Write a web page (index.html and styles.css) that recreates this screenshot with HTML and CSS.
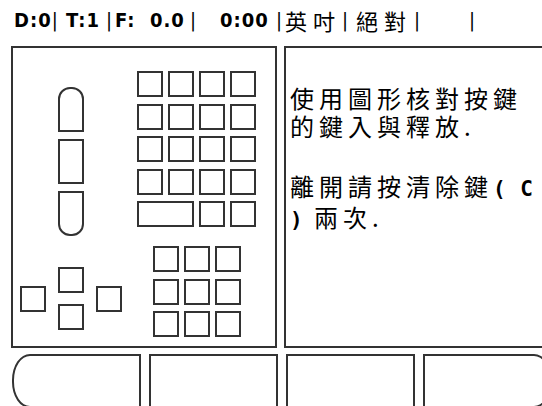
FILE: index.html
```html
<!DOCTYPE html>
<html lang="zh-Hant">
<head>
<meta charset="UTF-8">
<meta name="viewport" content="width=device-width, initial-scale=1.0">
<title>按鍵核對</title>
<link rel="stylesheet" href="styles.css">
</head>
<body>
  <div class="status">
    <div class="fld f1"><span class="val">D:0</span><span class="sep">|</span></div>
    <div class="fld f2"><span class="val">T:1</span><span class="sep">|</span></div>
    <div class="fld f3"><span class="val">F:&nbsp; 0.0</span><span class="sep">|</span></div>
    <div class="fld f4"><span class="val">0:00</span><span class="sep">|</span></div>
    <div class="fld f5"><span class="cjk">英吋</span><span class="sep">|</span></div>
    <div class="fld f6"><span class="cjk">絕對</span><span class="sep">|</span></div>
    <div class="fld f7"><span class="sep">|</span></div>
  </div>

  <div class="main">
    <div class="panel keys">
      <div class="col-left">
        <div class="pills">
          <div class="key pill top"></div>
          <div class="key pill"></div>
          <div class="key pill bottom"></div>
        </div>
        <div class="arrows">
          <div class="key"></div>
          <div class="updown">
            <div class="key"></div>
            <div class="key"></div>
          </div>
          <div class="key"></div>
        </div>
      </div>
      <div class="col-right">
        <div class="grid4">
          <div class="key"></div><div class="key"></div><div class="key"></div><div class="key"></div>
          <div class="key"></div><div class="key"></div><div class="key"></div><div class="key"></div>
          <div class="key"></div><div class="key"></div><div class="key"></div><div class="key"></div>
          <div class="key"></div><div class="key"></div><div class="key"></div><div class="key"></div>
          <div class="key wide"></div><div class="key"></div><div class="key"></div>
        </div>
        <div class="numpad">
          <div class="key"></div><div class="key"></div><div class="key"></div>
          <div class="key"></div><div class="key"></div><div class="key"></div>
          <div class="key"></div><div class="key"></div><div class="key"></div>
        </div>
      </div>
    </div>
    <div class="panel info">
      <p>使用圖形核對按鍵<br>的鍵入與釋放.</p>
      <p>離開請按清除鍵<b>( C</b><br><b>)</b> 兩次.</p>
    </div>
  </div>

  <div class="softkeys">
    <div class="soft first"></div>
    <div class="soft"></div>
    <div class="soft"></div>
    <div class="soft last"></div>
  </div>
</body>
</html>
```

FILE: styles.css
```css
html, body {
  margin: 0;
  padding: 0;
  background-color: #fff;
  color: #000;
  width: 542px;
  height: 406px;
  overflow: hidden;
}
body {
  font-family: 'Noto Sans CJK TC', sans-serif;
}

/* status line */
.status {
  display: flex;
  height: 46px;
  padding-left: 14px;
  padding-top: 9px;
  box-sizing: border-box;
  font-family: 'DejaVu Sans Condensed', 'DejaVu Sans', sans-serif;
  font-weight: bold;
  font-size: 20px;
  line-height: 22px;
  letter-spacing: 1px;
  white-space: pre;
}
.fld {
  display: flex;
  justify-content: space-between;
  box-sizing: border-box;
}
.sep {
  font-weight: normal;
  letter-spacing: 0;
}
.cjk {
  font-family: 'Noto Sans CJK TC', sans-serif;
  font-weight: normal;
  font-size: 22px;
  letter-spacing: 6px;
}
.f1 { width: 42px; }
.f2 { width: 56px; padding-left: 10px; }
.f3 { width: 84px; padding-left: 3px; }
.f4 { width: 86px; padding-left: 24px; }
.f5 { width: 66px; padding-left: 3px; }
.f6 { width: 72px; padding-left: 8px; }
.f7 { width: 55px; justify-content: flex-end; }

/* panels */
.main {
  display: flex;
  gap: 7px;
  padding-left: 11px;
  height: 302px;
}
.panel {
  border: 2px solid #333;
  box-sizing: border-box;
  height: 302px;
}
.keys {
  width: 266px;
  display: flex;
  gap: 16px;
  padding-left: 7px;
}
.info {
  flex: 1;
  border-right: none;
  margin-right: -10px;
  padding: 36px 0 0 4px;
  font-size: 24px;
  line-height: 28px;
  letter-spacing: 5px;
}
.info p {
  margin: 0 0 32px;
}
.info b {
  font-family: 'DejaVu Sans Mono', monospace;
  font-size: 21px;
  letter-spacing: 1px;
}

.key {
  width: 26px;
  height: 26px;
  border: 2px solid #333;
  box-sizing: border-box;
}

.col-left {
  width: 101px;
  display: flex;
  flex-direction: column;
  align-items: center;
}
.pills {
  margin-top: 39px;
  display: flex;
  flex-direction: column;
  gap: 7px;
}
.pill {
  height: 45px;
}
.pill.top {
  border-radius: 12px 12px 0 0;
}
.pill.bottom {
  border-radius: 0 0 12px 12px;
}
.arrows {
  margin-top: 31px;
  display: flex;
  align-items: center;
  gap: 12px;
}
.updown {
  display: flex;
  flex-direction: column;
  gap: 11px;
}

.col-right {
  width: 119px;
  display: flex;
  flex-direction: column;
  align-items: center;
}
.grid4 {
  margin-top: 23px;
  display: grid;
  grid-template-columns: repeat(4, 26px);
  column-gap: 5px;
  row-gap: 6.5px;
}
.grid4 .wide {
  width: auto;
  grid-column: span 2;
}
.numpad {
  margin-top: 19px;
  display: grid;
  grid-template-columns: repeat(3, 26px);
  column-gap: 5px;
  row-gap: 6.5px;
}

/* soft keys */
.softkeys {
  display: flex;
  gap: 8px;
  padding-left: 12px;
  margin-top: 6px;
}
.soft {
  width: 129px;
  height: 54px;
  flex-shrink: 0;
  border: 2px solid #333;
  box-sizing: border-box;
}
.soft.first {
  border-top-left-radius: 18px 26px;
  border-bottom-left-radius: 18px 26px;
}
.soft.last {
  border-top-right-radius: 18px 26px;
  border-bottom-right-radius: 18px 26px;
}
```
